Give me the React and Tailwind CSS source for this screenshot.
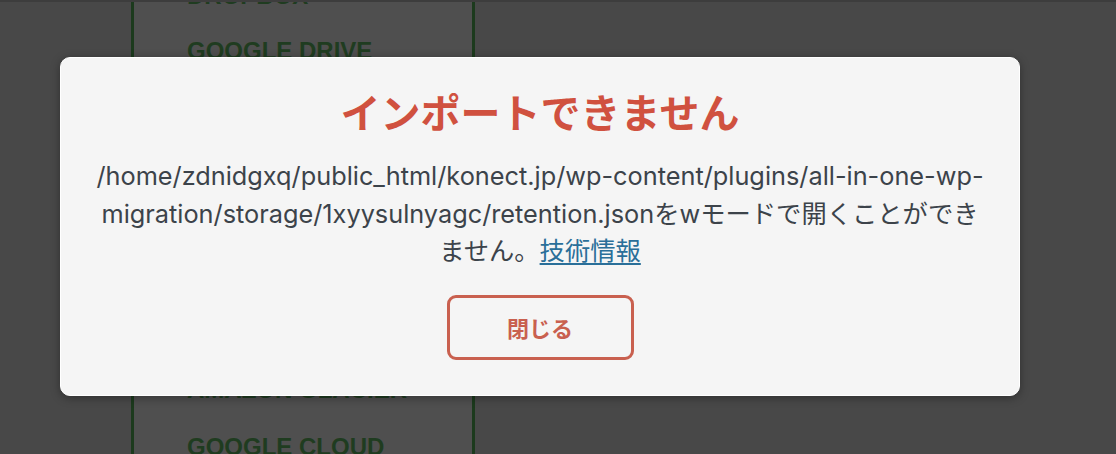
import React from "react";

const items = [
  "DROPBOX",
  "GOOGLE DRIVE",
  "AMAZON S3",
  "BACKBLAZE B2",
  "ONEDRIVE",
  "BOX",
  "MEGA",
  "AMAZON GLACIER",
  "GOOGLE CLOUD",
  "AZURE STORAGE",
];

export default function App() {
  return (
    <div className="relative w-[1116px] h-[454px] overflow-hidden bg-[#484848] border-t-2 border-[#3d3d3d]">
      <div className="ml-[131px] w-[344px] h-full border-x-[3px] border-[#1c3a1d] bg-[#4f4f4f] overflow-hidden">
        <div className="-mt-[34px] pl-[53px] flex flex-col">
          {items.map((t, i) => (
            <div
              key={t}
              className={
                (i === 0 ? "h-[55px] " : "h-[56.5px] ") +
                "shrink-0 flex items-center text-[24px] font-bold leading-none text-[#1f3c20] whitespace-nowrap"
              }
              style={{ fontFamily: '"Liberation Sans", Arial, sans-serif' }}
            >
              {t}
            </div>
          ))}
        </div>
      </div>

      <div className="absolute left-[60px] top-[55px] w-[960px] h-[339px] rounded-[10px] bg-[#f5f5f5] border border-white shadow-[0_2px_10px_rgba(0,0,0,0.35)] flex flex-col items-center pt-[29px]">
        <h1
          className="text-[40px] font-bold leading-[48px] text-[#d0513f]"
          style={{ fontFamily: '"Noto Sans CJK JP", "Noto Sans", sans-serif' }}
        >
          インポートできません
        </h1>
        <p
          className="mt-[22px] text-center text-[25.3px] leading-[37.5px] text-[#3c434a] whitespace-nowrap"
          style={{ fontFamily: 'Inter, "Noto Sans CJK JP", sans-serif' }}
        >
          /home/zdnidgxq/public_html/konect.jp/wp-content/plugins/all-in-one-wp-
          <br />
          migration/storage/1xyysulnyagc/retention.jsonをwモードで開くことができ
          <br />
          ません。
          <a href="#" className="text-[#2a6f99] underline underline-offset-[3px]">
            技術情報
          </a>
        </p>
        <button
          className="mt-[25px] w-[187px] h-[65px] rounded-[9px] border-[3px] border-[#c9604f] text-[#c9604f] text-[22px] font-bold flex items-center justify-center"
          style={{ fontFamily: '"Noto Sans CJK JP", sans-serif' }}
        >
          閉じる
        </button>
      </div>
    </div>
  );
}
